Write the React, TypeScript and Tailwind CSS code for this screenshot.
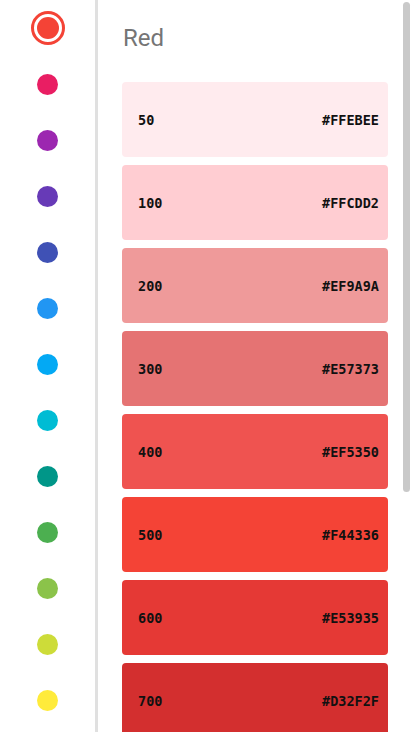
import { useState } from 'react';

const palettes = [
  { name: 'Red', color: '#F44336' },
  { name: 'Pink', color: '#E91E63' },
  { name: 'Purple', color: '#9C27B0' },
  { name: 'Deep Purple', color: '#673AB7' },
  { name: 'Indigo', color: '#3F51B5' },
  { name: 'Blue', color: '#2196F3' },
  { name: 'Light Blue', color: '#03A9F4' },
  { name: 'Cyan', color: '#00BCD4' },
  { name: 'Teal', color: '#009688' },
  { name: 'Green', color: '#4CAF50' },
  { name: 'Light Green', color: '#8BC34A' },
  { name: 'Lime', color: '#CDDC39' },
  { name: 'Yellow', color: '#FFEB3B' },
  { name: 'Amber', color: '#FFC107' },
];

const shades = [
  { level: '50', hex: '#FFEBEE' },
  { level: '100', hex: '#FFCDD2' },
  { level: '200', hex: '#EF9A9A' },
  { level: '300', hex: '#E57373' },
  { level: '400', hex: '#EF5350' },
  { level: '500', hex: '#F44336' },
  { level: '600', hex: '#E53935' },
  { level: '700', hex: '#D32F2F' },
  { level: '800', hex: '#C62828' },
  { level: '900', hex: '#B71C1C' },
];

export default function App() {
  const [selected, setSelected] = useState(0);

  return (
    <div className="h-[732px] w-[412px] flex bg-white overflow-hidden" style={{ fontFamily: 'Roboto, "Noto Sans", sans-serif' }}>
      {/* palette picker */}
      <div className="w-[98px] shrink-0 border-r-[3px] border-[#e0e0e0] flex flex-col overflow-hidden">
        {palettes.map((p, i) => (
          <button
            key={p.name}
            onClick={() => setSelected(i)}
            className="h-[56px] shrink-0 flex items-center justify-center"
          >
            {i === selected ? (
              <span className="w-[34px] h-[34px] rounded-full border-[3px] p-[3px] flex" style={{ borderColor: p.color }}>
                <span className="flex-1 rounded-full" style={{ backgroundColor: p.color }} />
              </span>
            ) : (
              <span className="w-[21px] h-[21px] rounded-full" style={{ backgroundColor: p.color }} />
            )}
          </button>
        ))}
      </div>

      {/* shades */}
      <div className="relative flex-1 overflow-hidden">
        <div className="h-full overflow-hidden px-6">
          <h1 className="pt-[22px] mb-[28px] pl-px text-[24px] leading-[32px] text-[#757575]">
            {palettes[selected].name}
          </h1>
          <div className="flex flex-col gap-2">
            {shades.map((s) => (
              <div
                key={s.level}
                className="h-[75px] shrink-0 rounded flex items-center justify-between pl-4 pr-[9px] pt-[2px] text-[13.5px] font-bold text-[#111111]"
                style={{ backgroundColor: s.hex, fontFamily: '"DejaVu Sans Mono", "Liberation Mono", monospace' }}
              >
                <span>{s.level}</span>
                <span>{s.hex}</span>
              </div>
            ))}
          </div>
        </div>
        {/* scrollbar thumb */}
        <div className="absolute right-[2px] top-[2px] w-[7px] h-[490px] rounded-full bg-[#c9c9c9]" />
      </div>
    </div>
  );
}
